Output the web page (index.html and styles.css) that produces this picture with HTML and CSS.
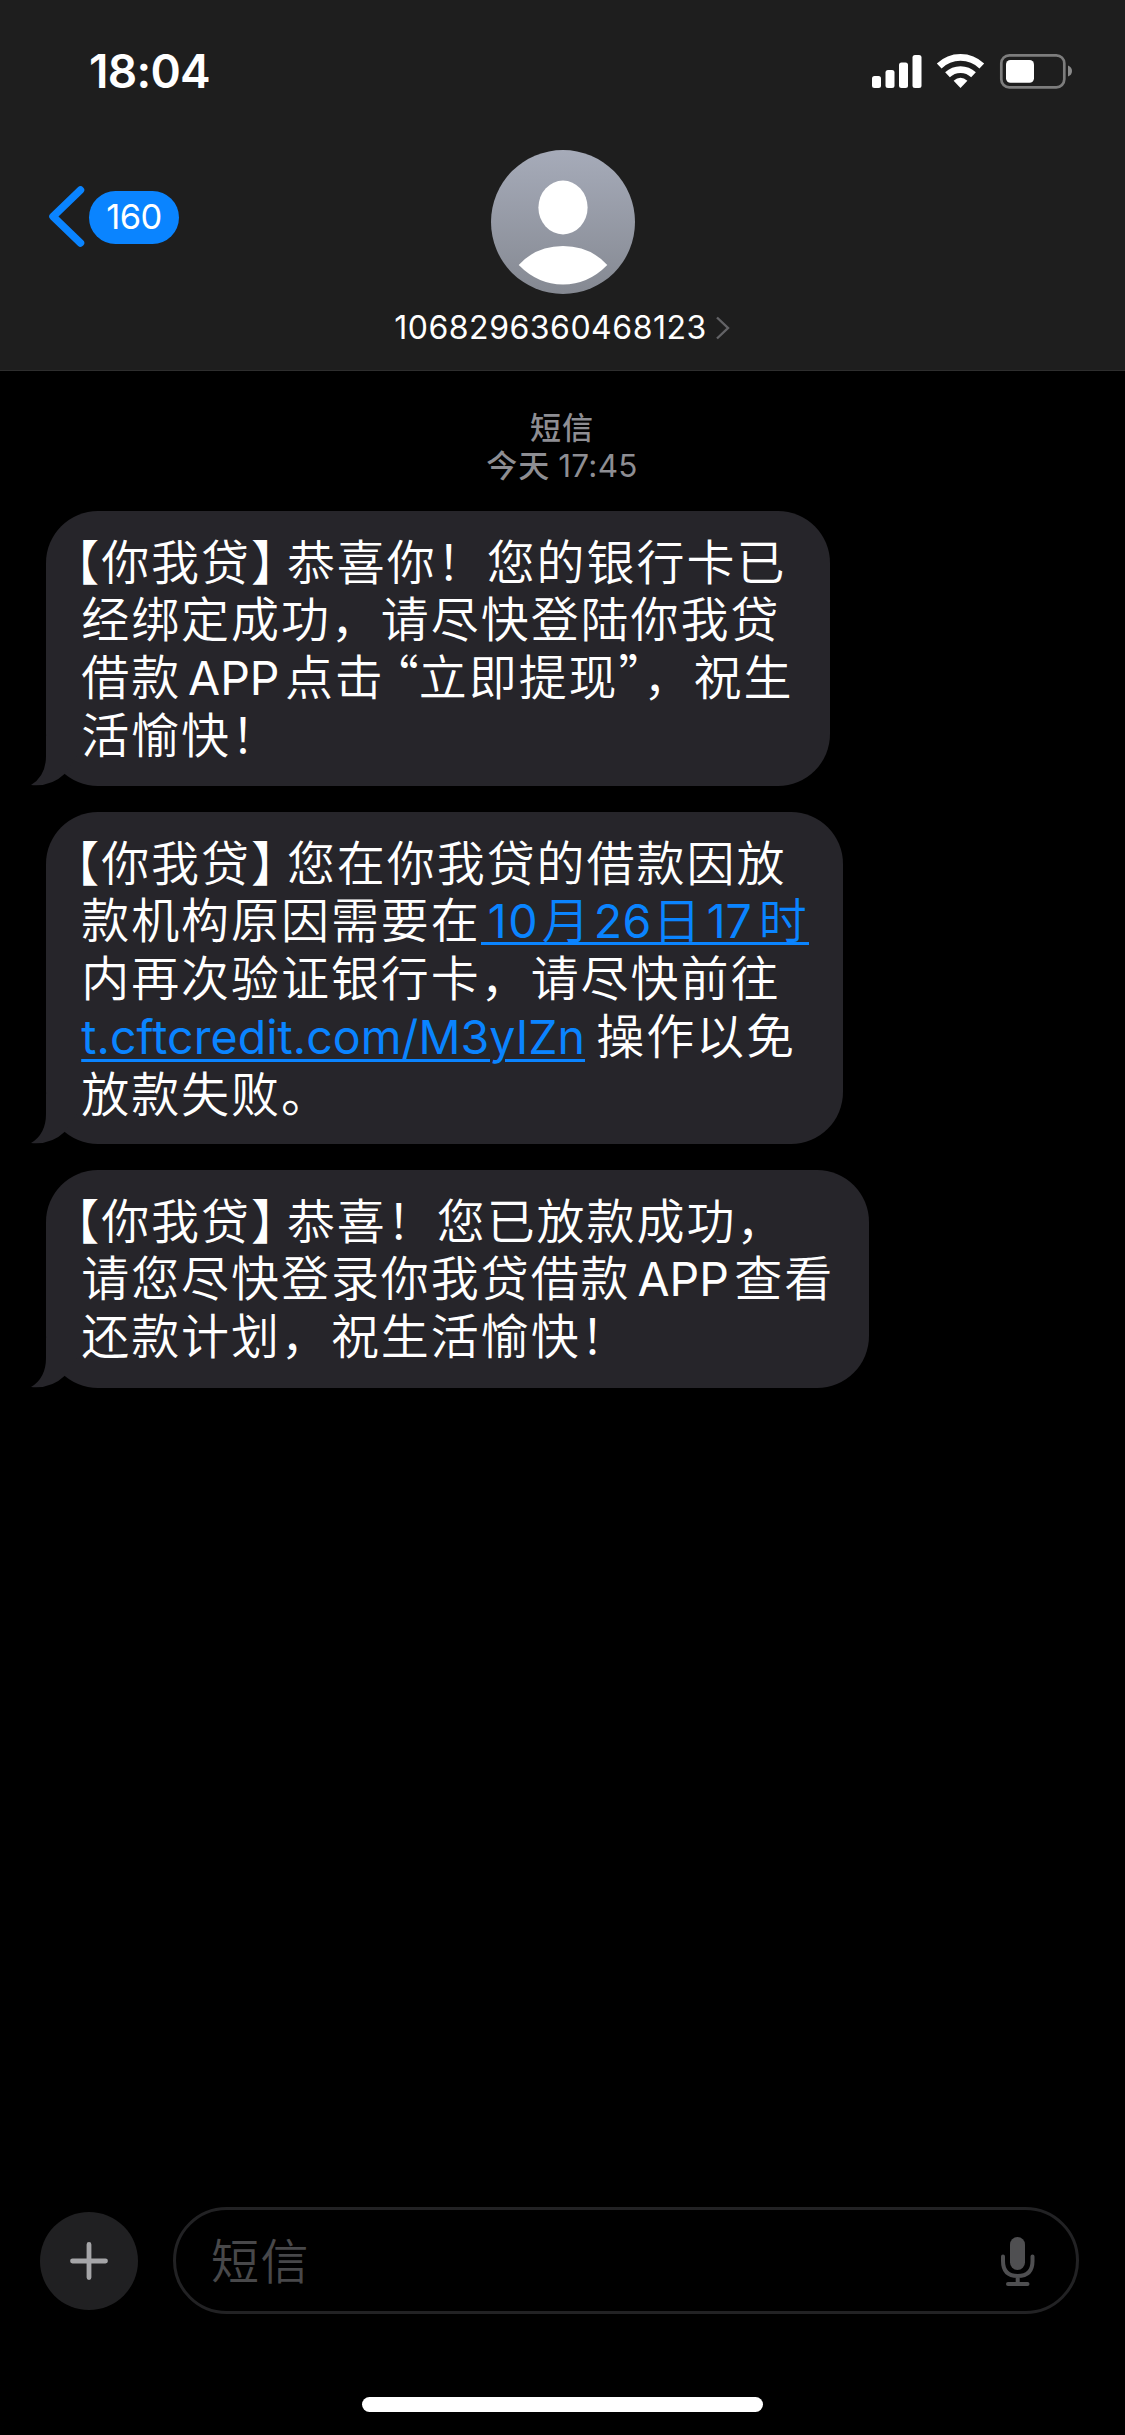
FILE: index.html
```html
<!DOCTYPE html>
<html lang="zh-CN">
<head>
<meta charset="utf-8">
<title>短信</title>
<link rel="stylesheet" href="styles.css">
</head>
<body>
<div class="phone">
  <header class="header">
    <div class="status">
      <span class="clock">18:04</span>
      <svg class="status-icons" width="204" height="40" viewBox="870 51 204 40">
        <g fill="#fff">
          <rect x="872" y="76" width="9" height="12" rx="2.5"/>
          <rect x="885.5" y="70" width="9" height="18" rx="2.5"/>
          <rect x="899" y="62.5" width="9" height="25.500" rx="2.5"/>
          <rect x="912.5" y="55" width="9" height="33" rx="2.5"/>
          <path d="M960.5 88 L953.600 80.800 Q960.500 74.800 967.400 80.800Z"/>
        </g>
        <g fill="none" stroke="#fff" stroke-width="6.800">
          <path d="M947.500 74.800 A18.800 18.800 0 0 1 973.500 74.800"/>
          <path d="M939.200 66 A30.500 30.500 0 0 1 981.800 66"/>
        </g>
        <rect x="1001.300" y="55.300" width="63" height="32" rx="8" fill="none" stroke="#7d7d7d" stroke-width="2.700"/>
        <rect x="1006" y="60" width="28" height="22.800" rx="4.500" fill="#fff"/>
        <path d="M1068 65.500 Q1072 67 1072 71 Q1072 75 1068 76.500Z" fill="#8a8a8a"/>
      </svg>
    </div>
    <div class="nav">
      <div class="back">
        <svg width="37" height="62" viewBox="0 0 37 62"><path d="M32.500 4 L5 30.500 L32.500 57" fill="none" stroke="#0a84ff" stroke-width="7.500" stroke-linecap="round" stroke-linejoin="round"/></svg>
        <span class="count">160</span>
      </div>
      <div class="contact">
        <svg width="144" height="144" viewBox="0 0 144 144">
          <defs><linearGradient id="av" x1="0" y1="0" x2="0" y2="1"><stop offset="0" stop-color="#a6abb9"/><stop offset="1" stop-color="#858992"/></linearGradient></defs>
          <circle cx="72" cy="72" r="72" fill="url(#av)"/>
          <ellipse cx="72" cy="57.500" rx="24.600" ry="26.900" fill="#fff"/>
          <path d="M27.700 115 Q45 96 72 96 Q99 96 116.300 115 Q97 134.500 72 134.500 Q47 134.500 27.700 115Z" fill="#fff"/>
        </svg>
        <div class="sender"><span class="number">1068296360468123</span><svg width="16" height="26" viewBox="0 0 16 26"><path d="M2 2.500 L13 13 L2 23.500" fill="none" stroke="#636366" stroke-width="2.400"/></svg></div>
      </div>
    </div>
  </header>

  <main class="thread">
    <div class="stamp"><div>短信</div><div>今天 <span class="stamp-time">17:45</span></div></div>

    <div class="bubble b1">
      <p><span class="open">【</span>你我贷<span class="close">】</span>恭喜你！您的银行卡已</p>
      <p>经绑定成功，请尽快登陆你我贷</p>
      <p>借款<span class="latin app">APP</span>点击<span class="quote ql">“</span>立即提现<span class="quote qr">”</span>，祝生</p>
      <p>活愉快！</p>
      <svg class="tail" width="46" height="50" viewBox="0 0 46 50"><path d="M15 0 V20 Q15 40 0 49 Q20 51 33.500 38 L46 20 V0Z"/></svg>
    </div>

    <div class="bubble b2">
      <p><span class="open">【</span>你我贷<span class="close">】</span>您在你我贷的借款因放</p>
      <p>款机构原因需要在<a class="date"><span class="latin d1">10</span>月<span class="latin d2">26</span>日<span class="latin d3">17</span>时</a></p>
      <p>内再次验证银行卡，请尽快前往</p>
      <p><a class="url">t.cftcredit.com/M3yIZn</a>操作以免</p>
      <p>放款失败。</p>
      <svg class="tail" width="46" height="50" viewBox="0 0 46 50"><path d="M15 0 V20 Q15 40 0 49 Q20 51 33.500 38 L46 20 V0Z"/></svg>
    </div>

    <div class="bubble b3">
      <p><span class="open">【</span>你我贷<span class="close">】</span>恭喜！您已放款成功，</p>
      <p>请您尽快登录你我贷借款<span class="latin app">APP</span>查看</p>
      <p>还款计划，祝生活愉快！</p>
      <svg class="tail" width="46" height="50" viewBox="0 0 46 50"><path d="M15 0 V20 Q15 40 0 49 Q20 51 33.500 38 L46 20 V0Z"/></svg>
    </div>
  </main>

  <footer class="composer">
    <div class="plus"><svg width="40" height="40" viewBox="0 0 40 40"><path d="M20 3.500 V36.500 M3.500 20 H36.500" stroke="#a5a5a8" stroke-width="4.800" stroke-linecap="round"/></svg></div>
    <div class="field">
      <span class="placeholder">短信</span>
      <svg width="34" height="50" viewBox="0 0 34 50"><rect x="9" y="1" width="15" height="33" rx="7.500" fill="#4f4f51"/><path d="M2 20.500 V25 Q2 40 16.700 40 Q31.500 40 31.500 25 V20.500 M16.700 40 V48 M7 48 H26.500" fill="none" stroke="#4f4f51" stroke-width="4" stroke-linecap="round"/></svg>
    </div>
  </footer>
  <div class="home"></div>
</div>
</body>
</html>
```
FILE: styles.css
```css
* { box-sizing: border-box; }
body { margin: 0; background: #000; }
p { margin: 0; }
svg { display: block; flex: none; }

.phone {
  width: 1125px;
  height: 2435px;
  display: flex;
  flex-direction: column;
  background: #000;
  color: #fff;
  font-family: "Noto Sans CJK SC", sans-serif;
  overflow: hidden;
}

.header {
  height: 371px;
  background: #1e1e1e;
  border-bottom: 1px solid #2e2e2e;
}
.status {
  height: 150px;
  padding: 51px 51px 0 89px;
  display: flex;
  justify-content: space-between;
  align-items: flex-start;
}
.clock {
  font: 600 46px/40px Inter, sans-serif;
  letter-spacing: -0.7px;
}
.nav {
  display: grid;
  grid-template-columns: 1fr 400px 1fr;
  align-items: start;
}
.back {
  display: flex;
  align-items: center;
  gap: 4px;
  padding: 36px 0 0 48px;
}
.count {
  width: 90px;
  height: 53px;
  border-radius: 27px;
  background: #0a84ff;
  font: 400 34.500px/52px Inter, sans-serif;
  letter-spacing: -0.5px;
  text-align: center;
}
.contact {
  display: flex;
  flex-direction: column;
  align-items: center;
}
.sender {
  display: flex;
  align-items: center;
  gap: 8px;
  margin-top: 14px;
  height: 40px;
}
.number {
  font: 400 32px/40px Inter, sans-serif;
  letter-spacing: 0.5px;
}

.thread {
  flex: 1;
  display: flex;
  flex-direction: column;
  align-items: flex-start;
  gap: 26px;
  padding: 36px 0 0 46px;
}
.stamp {
  align-self: center;
  margin-left: -47px;
  height: 78px;
  text-align: center;
  font-weight: 500;
  font-size: 31px;
  line-height: 38px;
  letter-spacing: 1px;
  color: #8e8e93;
}
.stamp-time { font: 400 31.500px/30px Inter, sans-serif; letter-spacing: 0.3px; }

.bubble {
  position: relative;
  border-radius: 52px;
  background: #26252a;
  padding: 19.500px 0 0 35.200px;
  font-size: 48px;
  font-weight: 350;
  line-height: 57.800px;
  letter-spacing: 1.940px;
  white-space: nowrap;
}
.b1 { width: 784px; height: 275px; }
.b2 { width: 797px; height: 332px; }
.b3 { width: 823px; height: 218px; }
.bubble p { height: 57.800px; }
.tail {
  position: absolute;
  left: -15px;
  bottom: 0;
  fill: #26252a;
}
.open { margin-left: -30px; }
.close { margin-right: -14px; }
.latin {
  display: inline-block;
  font: 400 46.500px/50px Inter, sans-serif;
  letter-spacing: 0;
}
.app { width: 103.800px; padding-left: 7px; }
.quote {
  display: inline-block;
  line-height: 50px;
  letter-spacing: 0;
}
.ql { width: 48px; margin-left: -14px; }
.qr { width: 25px; }
.date, .url {
  display: inline-block;
  height: 57.800px;
  color: #0a84ff;
}
.date { background: linear-gradient(#0a84ff, #0a84ff) 0 53px / 329px 3px no-repeat; }
.d1 { width: 61px; padding-left: 7px; letter-spacing: 1.500px; }
.d2 { width: 61px; padding-left: 2px; letter-spacing: 0.500px; }
.d3 { width: 56px; padding-left: 4px; }
.url {
  width: 515px;
  font: 400 46.500px/57.800px Inter, sans-serif;
  letter-spacing: 0.060px;
  text-decoration: underline;
  text-decoration-thickness: 3px;
  text-underline-offset: 5px;
}

.composer {
  display: flex;
  align-items: center;
  gap: 35px;
  height: 107px;
  margin: 0 46px 83px 40px;
}
.plus {
  width: 98px;
  height: 98px;
  border-radius: 50%;
  background: #202022;
  display: flex;
  align-items: center;
  justify-content: center;
}
.field {
  flex: 1;
  height: 107px;
  border: 3px solid #222224;
  border-radius: 54px;
  display: flex;
  align-items: center;
  justify-content: space-between;
  padding: 0 41px 0 35px;
  font-size: 48px;
  font-weight: 350;
  color: #48484a;
}
.placeholder {
  letter-spacing: 1.500px;
  padding-bottom: 5px;
}
.home {
  width: 401px;
  height: 15px;
  border-radius: 8px;
  background: #fff;
  margin: 0 auto 23px;
}
```
